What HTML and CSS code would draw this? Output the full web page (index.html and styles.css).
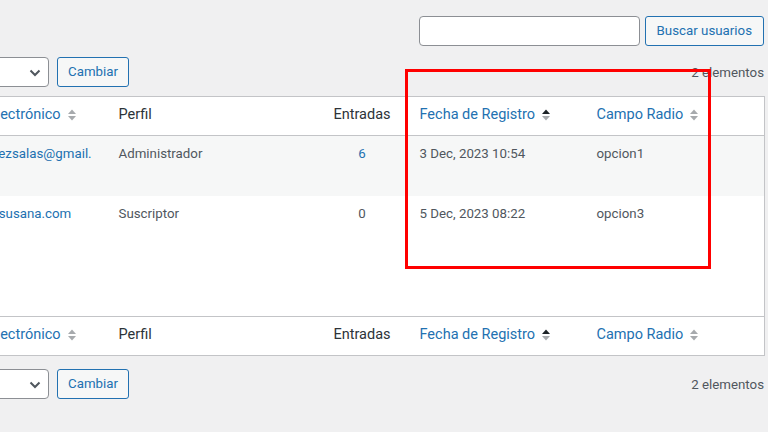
FILE: index.html
```html
<!DOCTYPE html>
<html lang="es">

<head>
    <meta charset="UTF-8">
    <meta name="viewport" content="width=device-width, initial-scale=1.0">
    <title>Usuarios</title>
    <link rel="stylesheet" href="styles.css">
</head>

<body>

    <div class="wrap">
        <!-- Search box -->
        <p class="search-box">
            <input type="search" class="search-input" value="">
            <button class="button">Buscar usuarios</button>
        </p>

        <!-- Top table navigation -->
        <div class="tablenav">
            <div class="actions">
                <span class="select-wrap">
                    <select class="role-select">
                        <option>Cambiar perfil a…</option>
                    </select>
                    <svg class="chevron" width="12" height="8" viewBox="0 0 12 8">
                        <path d="M1.5 1.5 L6 6 L10.5 1.5" fill="none" stroke="#50575e" stroke-width="2"/>
                    </svg>
                </span>
                <button class="button">Cambiar</button>
            </div>
            <span class="displaying-num">2 elementos</span>
        </div>

        <table class="users">
            <colgroup>
                <col class="col-email">
                <col class="col-role">
                <col class="col-posts">
                <col class="col-date">
                <col class="col-radio">
            </colgroup>
            <thead>
                <tr>
                    <th class="email"><a href="#" class="sort">Correo electrónico
                        <svg class="indicator" width="10" height="14" viewBox="0 0 10 14"><path d="M1 6 L5 1.5 L9 6Z" fill="#a7aaad"/><path d="M1 8 L5 12.5 L9 8Z" fill="#a7aaad"/></svg></a></th>
                    <th>Perfil</th>
                    <th class="num">Entradas</th>
                    <th><a href="#" class="sort">Fecha de Registro
                        <svg class="indicator" width="10" height="14" viewBox="0 0 10 14"><path d="M1 6 L5 1.5 L9 6Z" fill="#1d2327"/><path d="M1 8 L5 12.5 L9 8Z" fill="#a7aaad"/></svg></a></th>
                    <th><a href="#" class="sort">Campo Radio
                        <svg class="indicator" width="10" height="14" viewBox="0 0 10 14"><path d="M1 6 L5 1.5 L9 6Z" fill="#a7aaad"/><path d="M1 8 L5 12.5 L9 8Z" fill="#a7aaad"/></svg></a></th>
                </tr>
            </thead>
            <tbody>
                <tr class="alternate first">
                    <td class="email"><a href="#">maria.perezsalas@gmail.com</a></td>
                    <td>Administrador</td>
                    <td class="num"><a href="#">6</a></td>
                    <td>3 Dec, 2023 10:54</td>
                    <td>opcion1</td>
                </tr>
                <tr class="second">
                    <td class="email"><a href="#">carmen@susana.com</a></td>
                    <td>Suscriptor</td>
                    <td class="num">0</td>
                    <td>5 Dec, 2023 08:22</td>
                    <td>opcion3</td>
                </tr>
            </tbody>
            <tfoot>
                <tr>
                    <th class="email"><a href="#" class="sort">Correo electrónico
                        <svg class="indicator" width="10" height="14" viewBox="0 0 10 14"><path d="M1 6 L5 1.5 L9 6Z" fill="#a7aaad"/><path d="M1 8 L5 12.5 L9 8Z" fill="#a7aaad"/></svg></a></th>
                    <th>Perfil</th>
                    <th class="num">Entradas</th>
                    <th><a href="#" class="sort">Fecha de Registro
                        <svg class="indicator" width="10" height="14" viewBox="0 0 10 14"><path d="M1 6 L5 1.5 L9 6Z" fill="#1d2327"/><path d="M1 8 L5 12.5 L9 8Z" fill="#a7aaad"/></svg></a></th>
                    <th><a href="#" class="sort">Campo Radio
                        <svg class="indicator" width="10" height="14" viewBox="0 0 10 14"><path d="M1 6 L5 1.5 L9 6Z" fill="#a7aaad"/><path d="M1 8 L5 12.5 L9 8Z" fill="#a7aaad"/></svg></a></th>
                </tr>
            </tfoot>
        </table>

        <!-- Bottom table navigation -->
        <div class="tablenav bottom">
            <div class="actions">
                <span class="select-wrap">
                    <select class="role-select">
                        <option>Cambiar perfil a…</option>
                    </select>
                    <svg class="chevron" width="12" height="8" viewBox="0 0 12 8">
                        <path d="M1.5 1.5 L6 6 L10.5 1.5" fill="none" stroke="#50575e" stroke-width="2"/>
                    </svg>
                </span>
                <button class="button">Cambiar</button>
            </div>
            <span class="displaying-num">2 elementos</span>
        </div>
    </div>

    <!-- Red highlight drawn over the screenshot -->
    <div class="highlight"></div>

</body>

</html>
```

FILE: styles.css
```css
body {
    font-family: Roboto, "Noto Sans", sans-serif;
    font-size: 13.3px;
    color: #3c434a;
    background-color: #f0f0f1;
    margin: 0;
    padding: 0;
    position: relative;
    overflow: hidden;
    height: 432px;
}

a {
    color: #2271b1;
    text-decoration: none;
}

.wrap {
    width: 830px;
    margin-left: -66px;
}

.search-box {
    display: flex;
    justify-content: flex-end;
    gap: 5px;
    margin: 0;
    padding-top: 16px;
}

.search-input {
    width: 221px;
    height: 30px;
    box-sizing: border-box;
    border: 1px solid #8c8f94;
    border-radius: 4px;
    background-color: #fff;
    padding: 0 8px;
    font-family: inherit;
}

.button {
    height: 30px;
    box-sizing: border-box;
    padding: 0 10px;
    font-family: inherit;
    font-size: 13.3px;
    line-height: 28px;
    color: #2271b1;
    background-color: #f6f7f7;
    border: 1px solid #2271b1;
    border-radius: 3px;
    cursor: pointer;
}

.search-box .button {
    padding: 0 11px;
}

.tablenav {
    display: flex;
    align-items: center;
    height: 30px;
    margin-top: 11px;
    margin-bottom: 9px;
}

.tablenav.bottom {
    margin-top: 13px;
}

.actions {
    display: flex;
    gap: 8px;
    margin-left: -60px;
}

.select-wrap {
    position: relative;
    display: inline-block;
}

.role-select {
    width: 175px;
    height: 30px;
    appearance: none;
    -webkit-appearance: none;
    border: 1px solid #8c8f94;
    border-radius: 4px;
    background-color: #fff;
    color: #2c3338;
    font-family: inherit;
    font-size: 13.3px;
    padding: 0 24px 0 8px;
}

.chevron {
    position: absolute;
    right: 8px;
    top: 12px;
}

.displaying-num {
    margin-left: auto;
    color: #50575e;
}

.users {
    width: 830px;
    table-layout: fixed;
    border-collapse: collapse;
    background-color: #fff;
    border: 1px solid #c3c4c7;
}

.col-email { width: 174px; }
.col-role { width: 206px; }
.col-posts { width: 95px; }
.col-date { width: 177px; }
.col-radio { width: 178px; }

.users th {
    font-size: 14.5px;
    font-weight: 400;
    line-height: 22px;
    text-align: left;
    padding: 7px 10px 9px;
    color: #2c3338;
}

.users thead th {
    border-bottom: 1px solid #c3c4c7;
}

.users tfoot th {
    border-top: 1px solid #c3c4c7;
}

.users td {
    vertical-align: top;
    line-height: 20px;
    padding: 8px 10px;
    color: #50575e;
}

.users .num {
    text-align: center;
}

.users .email {
    padding-left: 7px;
}

.users td.email {
    padding-right: 16px;
    overflow-wrap: anywhere;
}

.users .first td {
    height: 44px;
}

.users .second td {
    height: 104px;
}

.alternate {
    background-color: #f6f7f7;
}

.sort {
    display: inline-flex;
    align-items: center;
    gap: 6px;
    white-space: nowrap;
}

.indicator {
    display: block;
}

.highlight {
    position: absolute;
    left: 405px;
    top: 69px;
    width: 300px;
    height: 194px;
    border: 3px solid #ff0000;
}
```
